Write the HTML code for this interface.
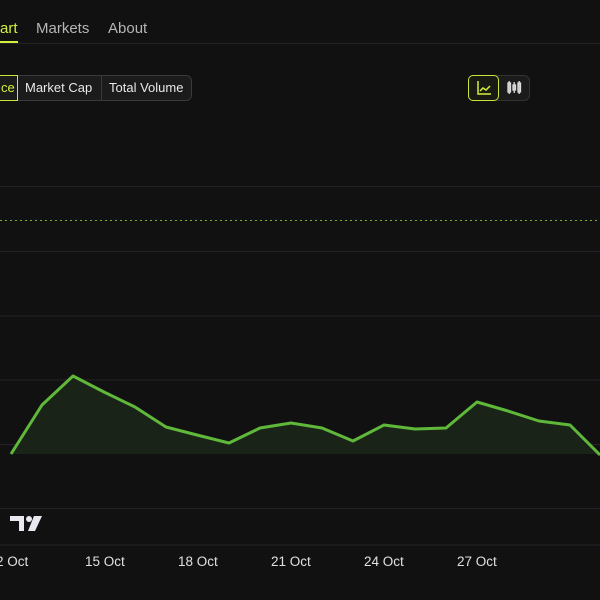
<!DOCTYPE html>
<html><head><meta charset="utf-8"><style>
*{margin:0;padding:0;box-sizing:border-box}
body{width:600px;height:600px;background:#111112;font-family:"Liberation Sans",sans-serif;overflow:hidden;position:relative;color:#ddd}
.t{position:absolute;font-size:15px;top:20px}
.btn{position:absolute;top:75px;height:26px;font-size:13px;line-height:26px;color:#e8e8e8}
.ax{position:absolute;top:554px;font-size:13.5px;color:#e0e0e0}
</style></head><body>
<div class="t" style="left:0;color:#d4f03c">art</div>
<div style="position:absolute;left:0;top:41px;width:18px;height:2px;background:#d4f03c"></div>
<div class="t" style="left:36px;color:#b5b5b5">Markets</div>
<div class="t" style="left:108px;color:#b5b5b5">About</div>
<div style="position:absolute;left:0;top:43px;width:600px;height:1px;background:#242424"></div>

<div style="position:absolute;left:-10px;top:75px;width:202px;height:26px;border:1px solid #3a3a3a;border-radius:6px;background:#1b1b1b"></div>
<div class="btn" style="left:-10px;width:28px;border:1px solid #c8e63c;border-radius:4px 0 0 4px;color:#d4f03c;padding-left:10px;line-height:24px">ce</div>
<div class="btn" style="left:25px">Market Cap</div>
<div style="position:absolute;left:101px;top:76px;width:1px;height:24px;background:#3a3a3a"></div>
<div class="btn" style="left:109px">Total Volume</div>

<div style="position:absolute;left:468px;top:75px;width:62px;height:26px;border:1px solid #333;border-radius:6px;background:#1b1b1b"></div>
<div style="position:absolute;left:468px;top:75px;width:31px;height:26px;border:1px solid #c8e63c;border-radius:5px;background:#1a1a14"></div>
<svg style="position:absolute;left:468px;top:75px" width="62" height="26">
<path d="M10 6V19H23" stroke="#d4f03c" stroke-width="1.5" fill="none"/>
<path d="M12 16L15 13L18 15L22 11" stroke="#d4f03c" stroke-width="1.5" fill="none"/>
<g stroke="#ddd" stroke-width="1.3" fill="none">
<rect x="40" y="8" width="2.5" height="9"/><line x1="41.2" y1="6" x2="41.2" y2="19"/>
<rect x="45" y="10" width="2.5" height="5"/><line x1="46.2" y1="7" x2="46.2" y2="18"/>
<rect x="50" y="8" width="2.5" height="9"/><line x1="51.2" y1="6" x2="51.2" y2="19"/>
</g></svg>

<svg style="position:absolute;left:0;top:0" width="600" height="600">
<g stroke="#222224" stroke-width="1.2">
<line x1="0" y1="186.5" x2="600" y2="186.5"/><line x1="0" y1="251.5" x2="600" y2="251.5"/>
<line x1="0" y1="316" x2="600" y2="316"/><line x1="0" y1="380" x2="600" y2="380"/>
<line x1="0" y1="444.5" x2="600" y2="444.5"/><line x1="0" y1="508.5" x2="600" y2="508.5"/>
<line x1="0" y1="545" x2="600" y2="545"/>
</g>
<line x1="0" y1="220.5" x2="600" y2="220.5" stroke="#7aa83a" stroke-width="1" stroke-dasharray="2 3"/>
<path d="M11 454L42 405L73 376L104 392L135 407L166 427L197 435L229 443L260 428L291 423L322 428L353 441L384 425L415 429L446 428L477 402L508 411L539 421L570 425L600 455L600 454Z" fill="#1a2317" />
<path d="M11 454L42 405L73 376L104 392L135 407L166 427L197 435L229 443L260 428L291 423L322 428L353 441L384 425L415 429L446 428L477 402L508 411L539 421L570 425L600 455" fill="none" stroke="#5fb83a" stroke-width="3" stroke-linejoin="round"/>
<g fill="#e8e8f0">
<path d="M10 516H24V531H19V521H10Z"/>
<circle cx="29" cy="519" r="3"/>
<path d="M34 516H42L35 531H28Z"/>
</g>
</svg>
<div class="ax" style="left:-4px">2 Oct</div>
<div class="ax" style="left:85px">15 Oct</div>
<div class="ax" style="left:178px">18 Oct</div>
<div class="ax" style="left:271px">21 Oct</div>
<div class="ax" style="left:364px">24 Oct</div>
<div class="ax" style="left:457px">27 Oct</div>
</body></html>
